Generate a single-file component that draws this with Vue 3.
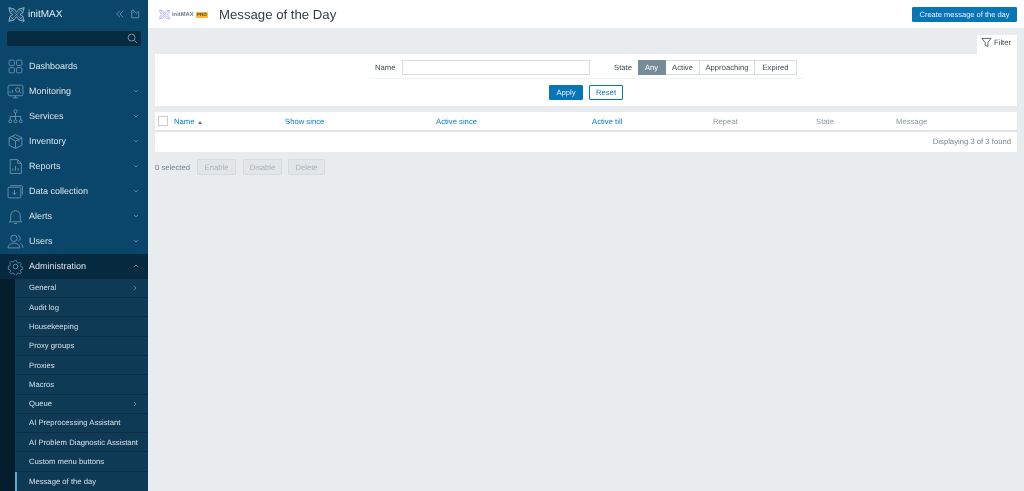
<script setup>
const menu = [
  { label: 'Dashboards', icon: 'dash' },
  { label: 'Monitoring', icon: 'mon', arrow: true },
  { label: 'Services', icon: 'serv', arrow: true },
  { label: 'Inventory', icon: 'inv', arrow: true },
  { label: 'Reports', icon: 'rep', arrow: true },
  { label: 'Data collection', icon: 'data', arrow: true },
  { label: 'Alerts', icon: 'alert', arrow: true },
  { label: 'Users', icon: 'users', arrow: true },
]
const submenu = [
  { label: 'General', more: true },
  { label: 'Audit log' },
  { label: 'Housekeeping' },
  { label: 'Proxy groups' },
  { label: 'Proxies' },
  { label: 'Macros' },
  { label: 'Queue', more: true },
  { label: 'AI Preprocessing Assistant' },
  { label: 'AI Problem Diagnostic Assistant' },
  { label: 'Custom menu buttons' },
  { label: 'Message of the day', selected: true },
]
const states = [
  { label: 'Any', width: 28 },
  { label: 'Active', width: 34 },
  { label: 'Approaching', width: 55 },
  { label: 'Expired', width: 42 },
]
const columns = [
  { label: 'Name', width: 111, link: true, sort: true },
  { label: 'Show since', width: 151, link: true },
  { label: 'Active since', width: 156, link: true },
  { label: 'Active till', width: 121, link: true },
  { label: 'Repeat', width: 103 },
  { label: 'State', width: 80 },
  { label: 'Message', width: 100 },
]
</script>

<template>
  <div class="page">
    <aside class="sidebar">
      <div class="brand">
        <svg class="brand-logo" viewBox="0 0 20 20" fill="none" stroke="#b4cbd9" stroke-width="0.9">
          <path d="M1 2l6 1.500 3 4 3-4 6-1.500-1.500 6-3.500 2 3.500 2 1.500 6-6-1.500-3-4-3 4-6 1.500 1.500-6 3.500-2-3.500-2z" />
          <path d="M1 2l18 16M19 2L1 18M7 3.500L2.500 8M13 3.500L17.500 8M7 16.500L2.500 12M13 16.500l4.500-4.500" stroke-width="0.6" />
        </svg>
        <span class="brand-name">initMAX</span>
        <svg class="brand-tool" viewBox="0 0 12 12" fill="none" stroke="#6f97b0" stroke-width="1">
          <path d="M6 2L2 6l4 4M10 2L6 6l4 4" />
        </svg>
        <svg class="brand-tool" viewBox="0 0 12 12" fill="none" stroke="#6f97b0" stroke-width="1">
          <path d="M4 2H2v8.500h8.500V3.500H8M3.500 1l2 1.500-1.500 2M5 2.500l3.500 3.500" />
        </svg>
      </div>
      <div class="search">
        <svg viewBox="0 0 12 12" fill="none" stroke="#7f9bae" stroke-width="1">
          <circle cx="5" cy="5" r="3.800" />
          <path d="M8 8l3.200 3.200" />
        </svg>
      </div>

      <nav class="menu">
        <a v-for="item in menu" :key="item.label" class="menu-item">
          <svg class="menu-icon" viewBox="0 0 16 16" fill="none" stroke="#6f9ab5" stroke-width="0.8">
            <g v-if="item.icon === 'dash'">
              <rect x="2" y="2" width="5" height="5" rx="1" />
              <rect x="9" y="2" width="5" height="5" rx="1" />
              <rect x="2" y="9" width="5" height="5" rx="1" />
              <rect x="9" y="9" width="5" height="5" rx="1" />
            </g>
            <g v-else-if="item.icon === 'mon'">
              <rect x="1" y="2" width="14" height="10" rx="1.500" />
              <path d="M5.500 14h5M8 12v2M3 9.500V8M5 9.500V6.500" />
              <circle cx="10" cy="6.500" r="2" />
              <path d="M11.500 8l1.500 1.500" />
            </g>
            <g v-else-if="item.icon === 'serv'">
              <circle cx="8" cy="3" r="1.500" />
              <path d="M8 4.500V8M3 11V8h10v3M8 8v3" />
              <circle cx="3" cy="12.500" r="1.400" />
              <circle cx="8" cy="12.500" r="1.400" />
              <circle cx="13" cy="12.500" r="1.400" />
            </g>
            <g v-else-if="item.icon === 'inv'">
              <path d="M8 1.500l6 3v7l-6 3-6-3v-7zM2 4.500l6 3 6-3M8 7.500v7M5 3l6 3v2" />
            </g>
            <g v-else-if="item.icon === 'rep'">
              <path d="M3 1.500h7l3.500 3.500v9.500H3zM10 1.500V5h3.500M5.500 12v-2M8 12V7.500M10.500 12V9.500" />
            </g>
            <g v-else-if="item.icon === 'data'">
              <rect x="1" y="4" width="12" height="10" rx="1" />
              <path d="M3 2.500h10.500a1 1 0 0 1 1 1V11M7 6.500v4.500M5 9l2 2 2-2" />
            </g>
            <g v-else-if="item.icon === 'alert'">
              <path d="M3.500 11.500V7a4.500 4.500 0 0 1 9 0v4.500l1.500 1.500H2zM6.500 14.500h3" />
            </g>
            <g v-else>
              <circle cx="6.500" cy="5" r="3" />
              <path d="M1 14c0-3 2.500-4.500 5.500-4.500S12 11 12 14zM10.500 2.200a3 3 0 0 1 0 5.600M12.500 9.800c1.500.7 2.500 2 2.500 4.200" />
            </g>
          </svg>
          <span class="menu-label">{{ item.label }}</span>
          <svg v-if="item.arrow" class="menu-arrow" viewBox="0 0 6 4" fill="none" stroke="#6f97b0" stroke-width="0.8">
            <path d="M1 1l2 2 2-2" />
          </svg>
        </a>
      </nav>

      <div class="admin">
        <a class="menu-item menu-item-open">
          <svg class="menu-icon" viewBox="0 0 16 16" fill="none" stroke="#6f9ab5" stroke-width="0.8">
            <circle cx="8" cy="8" r="2.200" />
            <path d="M6.800 1.500h2.400l.4 2 1.500.7 1.800-1 1.600 1.800-1.100 1.700.6 1.500 2 .5v2.400l-2 .4-.6 1.500 1.100 1.700-1.600 1.600-1.800-1-1.500.6-.4 2H6.800l-.4-2-1.500-.6-1.800 1-1.600-1.600 1.100-1.700-.6-1.500-2-.4V7.500l2-.5.6-1.500-1.100-1.700 1.600-1.800 1.800 1 1.500-.7z" transform="translate(1.300 1.300) scale(0.84)" />
          </svg>
          <span class="menu-label">Administration</span>
          <svg class="menu-arrow" viewBox="0 0 6 4" fill="none" stroke="#6f97b0" stroke-width="0.8">
            <path d="M1 3l2-2 2 2" />
          </svg>
        </a>
        <div class="sub-wrap">
          <div class="sub">
            <a v-for="item in submenu" :key="item.label" class="sub-item" :class="{ 'sub-item-selected': item.selected }">
              <span>{{ item.label }}</span>
              <svg v-if="item.more" class="sub-arrow" viewBox="0 0 4 6" fill="none" stroke="#6f97b0" stroke-width="0.8">
                <path d="M1 1l2 2-2 2" />
              </svg>
            </a>
          </div>
        </div>
      </div>
    </aside>

    <main class="main">
      <header class="topbar">
        <div class="small-logo">
          <svg viewBox="0 0 20 20" fill="none" stroke="#a9adf3" stroke-width="1.300">
            <path d="M1 2l6 1.500 3 4 3-4 6-1.500-1.500 6-3.500 2 3.500 2 1.500 6-6-1.500-3-4-3 4-6 1.500 1.500-6 3.500-2-3.500-2z" />
            <path d="M1 2l18 16M19 2L1 18" />
          </svg>
          <span class="small-logo-name">initMAX</span>
          <span class="small-logo-pro">PRO</span>
        </div>
        <h1>Message of the Day</h1>
        <button class="btn btn-create">Create message of the day</button>
      </header>

      <div class="content">
        <div class="filter-tabs">
          <div class="filter-tab">
            <svg viewBox="0 0 12 12" fill="none" stroke="#3d4a52" stroke-width="0.9">
              <path d="M1 1.500h10L7.500 6v4.500l-3-1.500V6z" />
            </svg>
            <span>Filter</span>
          </div>
        </div>
        <section class="filter">
          <div class="filter-row">
            <label class="filter-name">Name</label>
            <input class="filter-input" type="text" />
            <label class="filter-state">State</label>
            <div class="segments">
              <span
                v-for="(state, i) in states"
                :key="state.label"
                class="segment"
                :class="{ 'segment-on': i === 0 }"
                :style="{ width: state.width + 'px' }"
              >{{ state.label }}</span>
            </div>
          </div>
          <div class="filter-buttons">
            <button class="btn btn-apply">Apply</button>
            <button class="btn btn-reset">Reset</button>
          </div>
        </section>

        <section class="table">
          <div class="table-head">
            <span class="check"></span>
            <span
              v-for="col in columns"
              :key="col.label"
              class="col"
              :class="{ 'col-link': col.link }"
              :style="{ width: col.width + 'px' }"
            >{{ col.label }}<i v-if="col.sort" class="sort"></i></span>
          </div>
          <div class="table-foot">Displaying 3 of 3 found</div>
        </section>

        <div class="actions">
          <span class="selected">0 selected</span>
          <button class="btn-off">Enable</button>
          <button class="btn-off">Disable</button>
          <button class="btn-off btn-off-last">Delete</button>
        </div>
      </div>
    </main>
  </div>
</template>

<style>
body {
  margin: 0;
  overflow: hidden;
}
</style>

<style scoped>
.page {
  display: flex;
  width: 1024px;
  height: 491px;
  overflow: hidden;
  background: #e9ecef;
  font-family: "Liberation Sans", Arial, sans-serif;
  font-size: 7.700px;
  color: #3f4a50;
  text-rendering: geometricPrecision;
  white-space: nowrap;
  filter: blur(0.3px);
}

.sidebar {
  width: 148px;
  flex: none;
  background: #0a466a;
  display: flex;
  flex-direction: column;
  color: #d6e3ea;
}

.brand {
  display: flex;
  align-items: center;
  height: 29px;
  padding: 0 7px 0 8px;
}

.brand-logo {
  width: 17px;
  height: 17px;
  margin-right: 3px;
}

.brand-name {
  flex: 1;
  font-size: 10px;
  color: #e3edf2;
}

.brand-tool {
  width: 10px;
  height: 10px;
  margin-left: 4px;
  margin-right: 1px;
}

.search {
  display: flex;
  align-items: center;
  justify-content: flex-end;
  height: 15px;
  margin: 2px 7px 0;
  padding-right: 3px;
  background: #062a40;
  border-radius: 2px;
}

.search svg {
  width: 11px;
  height: 11px;
}

.menu {
  margin-top: 8px;
}

.menu-item {
  display: flex;
  align-items: center;
  height: 25px;
  padding: 0 9px 0 7px;
}

.menu-icon {
  width: 17px;
  height: 17px;
  flex: none;
  margin-right: 5px;
}

.menu-label {
  flex: 1;
  font-size: 9px;
  color: #d8e4eb;
}

.menu-arrow {
  width: 6px;
  height: 4px;
}

.admin {
  flex: 1;
  display: flex;
  flex-direction: column;
  background: #05293f;
}

.menu-item-open {
  height: 25px;
  flex: none;
}

.sub-wrap {
  flex: 1;
  padding-left: 15px;
  background: #031d2c;
}

.sub {
  height: 100%;
  background: #0f3a56;
}

.sub-item {
  display: flex;
  align-items: center;
  justify-content: space-between;
  box-sizing: border-box;
  height: 19.300px;
  padding: 0 11px 0 14px;
  border-bottom: 1px solid #0a2e45;
  font-size: 7.700px;
  color: #d3e0e8;
}

.sub-item-selected {
  border-left: 2px solid #5fa8d3;
  padding-left: 12px;
  border-bottom: 0;
}

.sub-arrow {
  width: 4px;
  height: 6px;
}

.main {
  flex: 1;
  min-width: 0;
  display: flex;
  flex-direction: column;
}

.topbar {
  display: flex;
  align-items: center;
  height: 28px;
  padding: 0 7px 0 11px;
  background: #fff;
}

.small-logo {
  display: flex;
  align-items: center;
  width: 60px;
  margin-top: 1px;
}

.small-logo svg {
  width: 11px;
  height: 11px;
  margin-right: 2px;
}

.small-logo-name {
  font-size: 5.800px;
  font-weight: 700;
  color: #6d7a92;
}

.small-logo-pro {
  margin-left: 2px;
  padding: 0 1.500px;
  background: #f4b93e;
  border-radius: 1px;
  font-size: 4.500px;
  font-weight: 700;
  line-height: 6px;
  color: #5a4a1a;
}

h1 {
  flex: 1;
  margin: 0;
  font-size: 13.200px;
  font-weight: 400;
  color: #323c42;
}

.btn {
  font-family: inherit;
  font-size: 7.700px;
  text-rendering: geometricPrecision;
  border-radius: 1px;
  padding: 0;
}

.btn-create {
  width: 105px;
  height: 15px;
  font-size: 7.500px;
  background: #0875b6;
  border: 1px solid #0875b6;
  color: #e8f2f8;
}

.content {
  flex: 1;
  padding: 7px 7px 0;
}

.filter-tabs {
  display: flex;
  justify-content: flex-end;
}

.filter-tab {
  display: flex;
  align-items: center;
  box-sizing: border-box;
  gap: 2px;
  width: 40px;
  height: 19px;
  padding: 0 0 4px 4px;
  background: #fff;
  color: #3f4a50;
}

.filter-tab svg {
  width: 11px;
  height: 11px;
}

.filter {
  height: 52px;
  background: #fff;
}

.filter-row {
  display: flex;
  align-items: flex-start;
  box-sizing: border-box;
  height: 25px;
  margin: 0 214px;
  padding: 6px 0 0 6px;
  border-bottom: 1px solid #f1f3f4;
}

.filter-name {
  width: 27px;
  flex: none;
  line-height: 15px;
}

.filter-input {
  flex: none;
  box-sizing: border-box;
  width: 188px;
  height: 15px;
  padding: 0;
  margin: 0 24px 0 0;
  border: 1px solid #d7dde0;
  background: #fff;
}

.filter-state {
  width: 24px;
  flex: none;
  line-height: 15px;
}

.segments {
  display: flex;
  height: 15px;
}

.segment {
  display: flex;
  align-items: center;
  justify-content: center;
  box-sizing: border-box;
  border: 1px solid #d7dde0;
  border-left: 0;
}

.segment-on {
  background: #768d99;
  border-color: #768d99;
  color: #fff;
}

.filter-buttons {
  display: flex;
  justify-content: center;
  gap: 6px;
  margin-top: 6px;
}

.btn-apply {
  width: 34px;
  height: 15px;
  background: #0875b6;
  border: 1px solid #0875b6;
  color: #e8f2f8;
}

.btn-reset {
  width: 34px;
  height: 15px;
  background: #fff;
  border: 1px solid #0875b6;
  color: #0875b6;
}

.table {
  margin-top: 6px;
  background: #fff;
}

.table-head {
  display: flex;
  align-items: center;
  box-sizing: border-box;
  height: 20px;
  border-bottom: 2px solid #e2e6e9;
  padding-left: 3px;
}

.check {
  box-sizing: border-box;
  width: 10px;
  height: 10px;
  margin-right: 6px;
  border: 1px solid #c6ced2;
  flex: none;
}

.col {
  flex: none;
  color: #8b979e;
}

.col-link {
  color: #0a7cbf;
}

.sort {
  display: inline-block;
  width: 0;
  height: 0;
  margin-left: 3px;
  border-left: 2px solid transparent;
  border-right: 2px solid transparent;
  border-bottom: 3px solid #5f7280;
}

.table-foot {
  height: 20px;
  line-height: 20px;
  padding-right: 6px;
  text-align: right;
  color: #73848e;
}

.actions {
  display: flex;
  align-items: center;
  gap: 7px;
  margin-top: 7px;
  color: #73848e;
}

.selected {
  width: 35px;
}

.btn-off {
  height: 16px;
  padding: 0;
  width: 39px;
  font-family: inherit;
  font-size: 7.700px;
  text-rendering: geometricPrecision;
  color: #a9b2b7;
  background: #e3e6e9;
  border: 1px solid #d6dbde;
  border-radius: 1px;
}

.btn-off-last {
  width: 37px;
  margin-left: -1px;
}
</style>
